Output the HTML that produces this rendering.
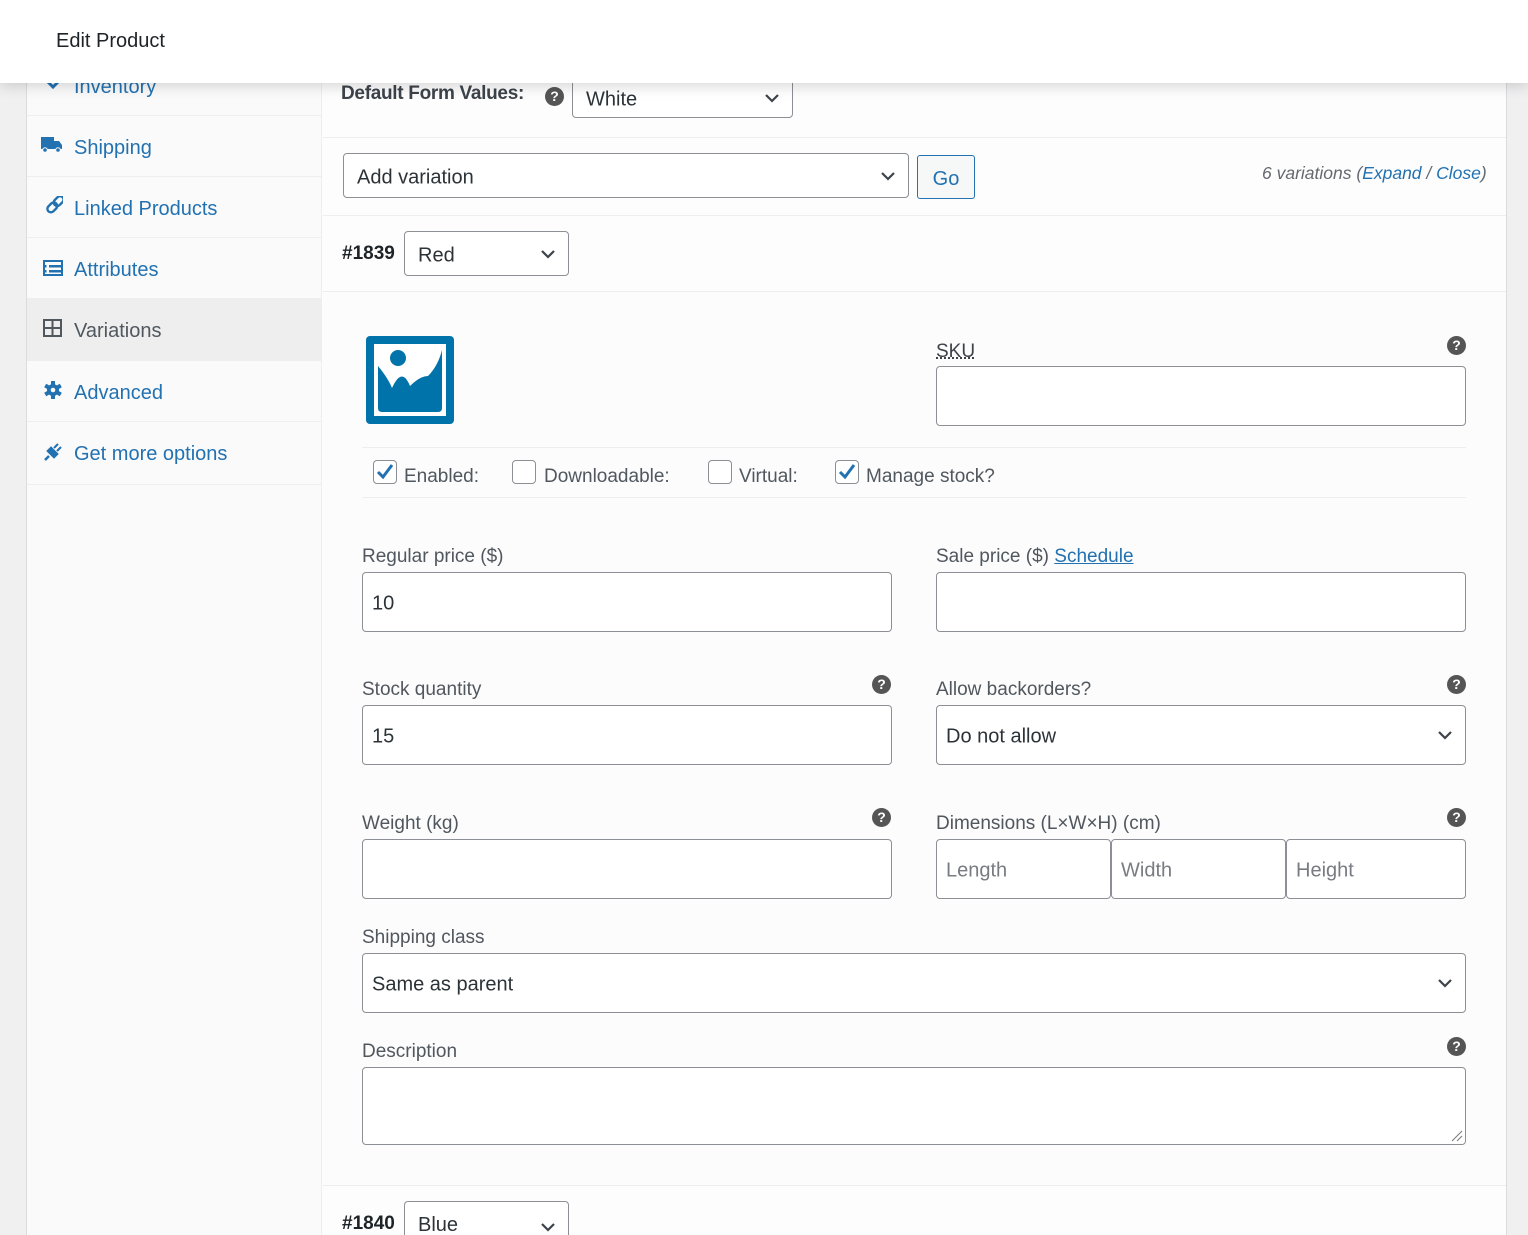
<!DOCTYPE html>
<html style="width:1528px;height:1235px;overflow:hidden"><head><meta charset="utf-8">
<style>
*{box-sizing:border-box;margin:0;padding:0}
body{width:1528px;height:1235px;overflow:hidden;background:#f0f0f1;font-family:"Liberation Sans",sans-serif;color:#3c434a;position:relative}
.a{position:absolute}
.panel{left:26px;top:0;width:1481px;height:1235px;background:#fdfdfd;border-left:1px solid #dcdcde;border-right:1px solid #dcdcde}
.side{left:27px;top:0;width:295px;height:1235px;background:#fafafa;border-right:1px solid #eee}
.si{position:absolute;left:27px;width:295px;height:61px;border-bottom:1px solid #eee;color:#2271b1;font-size:20px}
.si span.t{position:absolute;left:47px;top:21px}
.si .ic{position:absolute;left:16px;top:20px}
.hdr{left:0;top:0;width:1528px;height:83px;background:#fff;box-shadow:0 2px 14px rgba(0,0,0,.18);z-index:5}
.hdr span{position:absolute;left:56px;top:30px;font-size:20px;color:#1d2327}
.box{position:absolute;border:1px solid #8c8f94;border-radius:4px;background:#fff;font-size:20px;color:#2c3338}
.box .v{position:absolute;left:9px;top:50%;transform:translateY(-50%);margin-top:2px}
.chev{position:absolute;right:12px;top:50%;margin-top:-6px}
.lbl{position:absolute;font-size:19px;color:#50575e;margin-top:2px}
.hl{position:absolute;width:19px;height:19px;border-radius:50%;background:#555;color:#fff;font-size:14px;font-weight:bold;text-align:center;line-height:19px}
.line{position:absolute;height:1px;background:#eee}
.cb{position:absolute;width:24px;height:24px;border:1px solid #8c8f94;border-radius:4px;background:#fff}
.ph{color:#787c82}
</style></head><body>
<div class="a panel"></div>
<div class="a side"></div>

<div class="si" style="top:55px"><svg class="ic" width="20" height="14" viewBox="0 0 20 14" style="top:22px"><polyline points="3,3 10,10 17,3" fill="none" stroke="#2271b1" stroke-width="3"/></svg><span class="t">Inventory</span></div>
<div class="si" style="top:116px"><svg class="ic" width="22" height="18" viewBox="0 0 22 18" style="top:20px;left:14px"><rect x="0" y="1" width="13" height="12" fill="#2271b1"/><path d="M13 5h5l3 4v4h-8z" fill="#2271b1"/><circle cx="4" cy="14" r="2.3" fill="#2271b1" stroke="#fafafa" stroke-width="1"/><circle cx="17" cy="14" r="2.3" fill="#2271b1" stroke="#fafafa" stroke-width="1"/></svg><span class="t">Shipping</span></div>
<div class="si" style="top:177px"><svg class="ic" width="20" height="20" viewBox="0 0 20 20" style="top:19px"><g fill="none" stroke="#2271b1" stroke-width="2.4"><rect x="7" y="0" width="7" height="11" rx="3.5" transform="rotate(45 10 10) translate(0 -3)"/><rect x="7" y="9" width="7" height="11" rx="3.5" transform="rotate(45 10 10) translate(0 -3)"/></g></svg><span class="t">Linked Products</span></div>
<div class="si" style="top:238px;height:61px"><svg class="ic" width="20" height="16" viewBox="0 0 20 16" style="top:22px"><rect x="1" y="1" width="18" height="14" fill="none" stroke="#2271b1" stroke-width="2"/><rect x="1" y="5" width="18" height="2.5" fill="#2271b1"/><rect x="1" y="10" width="18" height="2.5" fill="#2271b1"/><rect x="3.5" y="5" width="2.5" height="7.5" fill="#fafafa"/></svg><span class="t">Attributes</span></div>
<div class="si" style="top:299px;height:62px;background:#eee;color:#50575e"><svg class="ic" width="20" height="18" viewBox="0 0 20 18" style="top:20px"><rect x="1" y="1" width="17" height="16" fill="none" stroke="#50575e" stroke-width="2"/><line x1="9.5" y1="1" x2="9.5" y2="17" stroke="#50575e" stroke-width="2"/><line x1="1" y1="9" x2="18" y2="9" stroke="#50575e" stroke-width="2"/></svg><span class="t">Variations</span></div>
<div class="si" style="top:361px"><svg class="ic" width="20" height="20" viewBox="0 0 20 20" style="top:19px"><g fill="#2271b1"><circle cx="10" cy="10" r="6"/><rect x="8" y="1" width="4" height="18"/><rect x="8" y="1" width="4" height="18" transform="rotate(60 10 10)"/><rect x="8" y="1" width="4" height="18" transform="rotate(120 10 10)"/></g><circle cx="10" cy="10" r="2.3" fill="#fafafa"/></svg><span class="t">Advanced</span></div>
<div class="si" style="top:422px;height:63px"><svg class="ic" width="20" height="20" viewBox="0 0 20 20" style="top:20px"><path d="M2 18l4-4M5 9l6 6 3-3-6-6z" fill="#2271b1" stroke="#2271b1" stroke-width="2.5"/><path d="M11 6l4-4M14 9l4-4" stroke="#2271b1" stroke-width="2"/></svg><span class="t">Get more options</span></div>

<div class="hdr a"><span>Edit Product</span></div>

<div class="a" style="left:341px;top:83px;font-size:19px;color:#3c434a;font-weight:bold;letter-spacing:-0.3px">Default Form Values:</div>
<div class="hl" style="left:545px;top:87px">?</div>
<div class="box" style="left:572px;top:78px;width:221px;height:40px"><span class="v" style="left:13px">White</span><svg class="chev" width="16" height="12" viewBox="0 0 16 12"><polyline points="2,3 8,9 14,3" fill="none" stroke="#3c434a" stroke-width="2.2"/></svg></div>
<div class="line" style="left:323px;top:137px;width:1183px"></div>

<div class="box" style="left:343px;top:153px;width:566px;height:45px"><span class="v" style="left:13px">Add variation</span><svg class="chev" width="16" height="12" viewBox="0 0 16 12"><polyline points="2,3 8,9 14,3" fill="none" stroke="#3c434a" stroke-width="2.2"/></svg></div>
<div class="a" style="left:917px;top:155px;width:58px;height:44px;border:1px solid #2271b1;border-radius:3px;background:#f6f7f7;color:#2271b1;font-size:20px;text-align:center;line-height:46px">Go</div>
<div class="a" style="left:1262px;top:163px;font-size:17.5px;font-style:italic;color:#646970">6 variations (<span style="color:#2271b1">Expand</span> / <span style="color:#2271b1">Close</span>)</div>
<div class="line" style="left:323px;top:215px;width:1183px"></div>

<div class="a" style="left:342px;top:243px;font-size:19px;font-weight:bold;color:#1d2327">#1839</div>
<div class="box" style="left:404px;top:231px;width:165px;height:45px"><span class="v" style="left:13px">Red</span><svg class="chev" width="16" height="12" viewBox="0 0 16 12"><polyline points="2,3 8,9 14,3" fill="none" stroke="#3c434a" stroke-width="2.2"/></svg></div>
<div class="line" style="left:323px;top:291px;width:1183px"></div>
<div class="a" style="left:323px;top:292px;width:1183px;height:893px;background:#fcfcfc"></div>

<svg class="a" style="left:366px;top:336px" width="88" height="88" viewBox="0 0 88 88"><rect x="0" y="0" width="88" height="88" rx="4" fill="#0073aa"/><rect x="8" y="8" width="72" height="72" fill="#fff"/><path d="M12 30 Q22 42 26 52 Q36 30 44 50 Q54 40 62 40 Q72 30 76 14 L76 72 Q76 76 72 76 L16 76 Q12 76 12 72 Z" fill="#0073aa"/><circle cx="32" cy="22" r="8" fill="#0073aa"/></svg>

<div class="lbl" style="left:936px;top:339px;color:#3c434a;text-decoration:underline dotted">SKU</div>
<div class="hl" style="left:1447px;top:336px">?</div>
<div class="box" style="left:936px;top:366px;width:530px;height:60px"></div>
<div class="line" style="left:362px;top:447px;width:1104px"></div>

<div class="cb" style="left:373px;top:460px"><svg width="22" height="22" viewBox="0 0 22 22"><polyline points="4,11 9,16 18,4" fill="none" stroke="#2271b1" stroke-width="3"/></svg></div>
<div class="lbl" style="left:404px;top:464px">Enabled:</div>
<div class="cb" style="left:512px;top:460px"></div>
<div class="lbl" style="left:544px;top:464px">Downloadable:</div>
<div class="cb" style="left:708px;top:460px"></div>
<div class="lbl" style="left:739px;top:464px">Virtual:</div>
<div class="cb" style="left:835px;top:460px"><svg width="22" height="22" viewBox="0 0 22 22"><polyline points="4,11 9,16 18,4" fill="none" stroke="#2271b1" stroke-width="3"/></svg></div>
<div class="lbl" style="left:866px;top:464px">Manage stock?</div>
<div class="line" style="left:362px;top:497px;width:1104px"></div>

<div class="lbl" style="left:362px;top:544px">Regular price ($)</div>
<div class="box" style="left:362px;top:572px;width:530px;height:60px"><span class="v">10</span></div>
<div class="lbl" style="left:936px;top:544px">Sale price ($) <span style="color:#2271b1;text-decoration:underline">Schedule</span></div>
<div class="box" style="left:936px;top:572px;width:530px;height:60px"></div>

<div class="lbl" style="left:362px;top:677px">Stock quantity</div>
<div class="hl" style="left:872px;top:675px">?</div>
<div class="box" style="left:362px;top:705px;width:530px;height:60px"><span class="v">15</span></div>
<div class="lbl" style="left:936px;top:677px">Allow backorders?</div>
<div class="hl" style="left:1447px;top:675px">?</div>
<div class="box" style="left:936px;top:705px;width:530px;height:60px"><span class="v">Do not allow</span><svg class="chev" width="16" height="12" viewBox="0 0 16 12"><polyline points="2,3 8,9 14,3" fill="none" stroke="#3c434a" stroke-width="2.2"/></svg></div>

<div class="lbl" style="left:362px;top:811px">Weight (kg)</div>
<div class="hl" style="left:872px;top:808px">?</div>
<div class="box" style="left:362px;top:839px;width:530px;height:60px"></div>
<div class="lbl" style="left:936px;top:811px">Dimensions (L×W×H) (cm)</div>
<div class="hl" style="left:1447px;top:808px">?</div>
<div class="box" style="left:936px;top:839px;width:175px;height:60px"><span class="v ph">Length</span></div>
<div class="box" style="left:1111px;top:839px;width:175px;height:60px"><span class="v ph">Width</span></div>
<div class="box" style="left:1286px;top:839px;width:180px;height:60px"><span class="v ph">Height</span></div>

<div class="lbl" style="left:362px;top:925px">Shipping class</div>
<div class="box" style="left:362px;top:953px;width:1104px;height:60px"><span class="v">Same as parent</span><svg class="chev" width="16" height="12" viewBox="0 0 16 12"><polyline points="2,3 8,9 14,3" fill="none" stroke="#3c434a" stroke-width="2.2"/></svg></div>

<div class="lbl" style="left:362px;top:1039px">Description</div>
<div class="hl" style="left:1447px;top:1037px">?</div>
<div class="box" style="left:362px;top:1067px;width:1104px;height:78px"><svg style="position:absolute;right:2px;bottom:2px" width="12" height="12" viewBox="0 0 12 12"><line x1="1" y1="11" x2="11" y2="1" stroke="#777"/><line x1="6" y1="11" x2="11" y2="6" stroke="#777"/></svg></div>

<div class="line" style="left:323px;top:1185px;width:1183px"></div>
<div class="a" style="left:342px;top:1213px;font-size:19px;font-weight:bold;color:#1d2327">#1840</div>
<div class="box" style="left:404px;top:1201px;width:165px;height:34px;border-bottom:none;border-radius:4px 4px 0 0"><span class="v" style="left:13px;top:auto;bottom:-2px;transform:none">Blue</span><svg class="chev" width="16" height="12" viewBox="0 0 16 12" style="top:auto;bottom:2px"><polyline points="2,3 8,9 14,3" fill="none" stroke="#3c434a" stroke-width="2.2"/></svg></div>
</body></html>
